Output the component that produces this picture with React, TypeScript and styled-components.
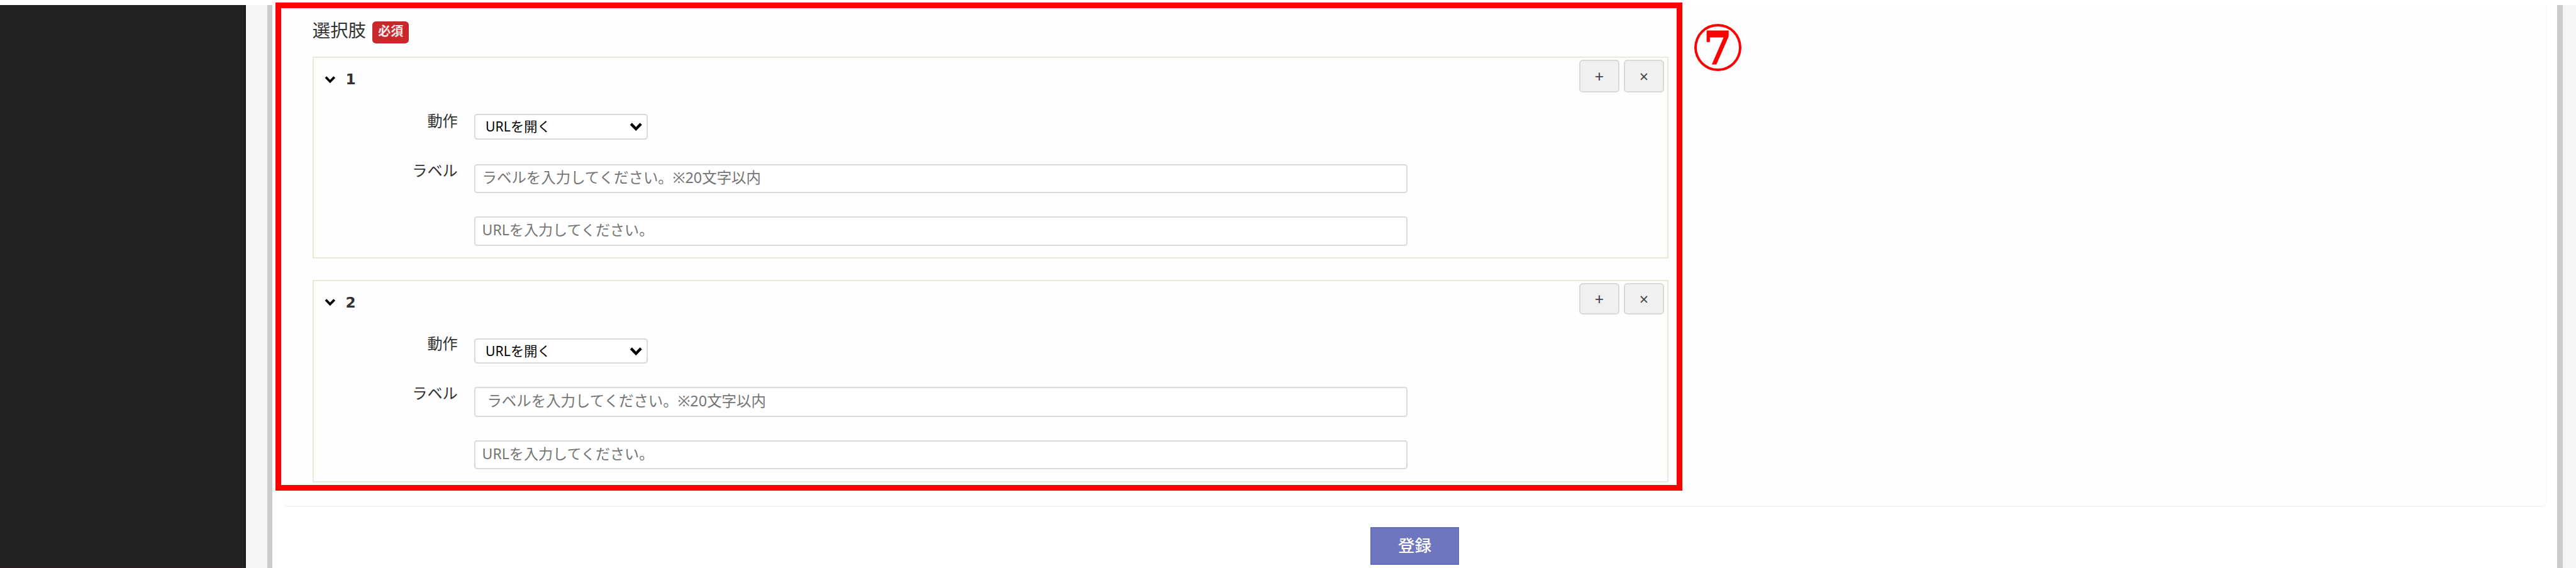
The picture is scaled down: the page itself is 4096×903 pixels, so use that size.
import React from 'react';
import styled, { createGlobalStyle } from 'styled-components';

// 1rem = 1/440 of the window width
const GlobalStyle = createGlobalStyle`
  html {
    font-size: 0.2272727vw;
  }

  body {
    background: #fff;
    color: #333;
    font-family: 'Noto Sans', 'Noto Sans CJK JP', sans-serif;
    margin: 0;
    overflow: hidden;
  }

  * {
    box-sizing: border-box;
  }
`;

const Page = styled.div`
  display: flex;
  height: 97rem;
  padding-top: 0.9rem;
  position: relative;
  width: 440rem;
`;

const Sidebar = styled.div`
  background: #222;
  border-bottom: 1px solid #2b2023;
  border-right: 2px solid #141414;
  width: 42.05rem;
`;

const Gutter = styled.div<{ $width: string }>`
  background: #f6f6f6;
  flex: none;
  width: ${({ $width }) => $width};
`;

const Main = styled.main`
  border-left: 8px solid #cbcbcb;
  border-right: 9px solid #cbcbcb;
  display: flex;
  flex: 1;
  flex-direction: column;
  padding: 0 1.8rem;
`;

const Panel = styled.section`
  background: #fefefe;
  border: 1px solid #fbfbfb;
  border-bottom: 2px solid #f4f4f4;
  border-radius: 0 0 0.8rem 0.8rem;
  border-top: 0;
  height: 85.7rem;
  padding: 2.5rem 0 0 4.9rem;
`;

const Heading = styled.div`
  align-items: flex-start;
  display: flex;
  gap: 1.1rem;
  height: 6.3rem;
`;

const Title = styled.span`
  font-size: 3.05rem;
  line-height: 3.6rem;
`;

const Badge = styled.span`
  background: #c9282a;
  border-radius: 0.6rem;
  color: #fbe9e9;
  font-size: 2.15rem;
  font-weight: bold;
  height: 3.7rem;
  line-height: 3.5rem;
  margin-top: 0.3rem;
  text-align: center;
  width: 6.25rem;
`;

const Card = styled.div<{ $height: number }>`
  border: 2px solid #eeeadb;
  display: flex;
  flex-direction: column;
  height: ${({ $height }) => $height}rem;
  margin-bottom: 3.7rem;
  width: 231.6rem;
`;

const CardHead = styled.div`
  display: flex;
  height: 7.5rem;
  justify-content: space-between;
  padding: 0.3rem 0.5rem 0 1.8rem;
`;

const CardTitle = styled.div`
  align-items: center;
  display: flex;
  font-family: 'DejaVu Sans', sans-serif;
  font-size: 2.5rem;
  font-weight: bold;
  gap: 1.75rem;
  height: 6.6rem;
`;

const Buttons = styled.div`
  display: flex;
  gap: 0.75rem;
`;

const SmallButton = styled.button<{ $height: number }>`
  background: #f0f0f0;
  border: 2px solid #d9d9d9;
  border-radius: 0.6rem;
  color: #444;
  font-family: 'Noto Sans', sans-serif;
  font-size: 2.7rem;
  height: ${({ $height }) => $height}rem;
  line-height: 1;
  padding: 0.2rem 0 0;
  width: 6.9rem;
`;

const Row = styled.div<{ $height: number }>`
  align-items: flex-start;
  display: flex;
  height: ${({ $height }) => $height}rem;
`;

const Label = styled.label<{ $top: number }>`
  font-size: 2.6rem;
  line-height: 3rem;
  margin-right: 2.85rem;
  margin-top: ${({ $top }) => $top}rem;
  text-align: right;
  width: 24.6rem;
`;

const SelectBox = styled.div`
  align-items: center;
  background: #fff;
  border: 2px solid #dadada;
  border-radius: 0.5rem;
  display: flex;
  height: 4.35rem;
  padding-right: 0.7rem;
  width: 29.6rem;
`;

const Select = styled.select`
  appearance: none;
  background: transparent;
  border: 0;
  color: #000;
  flex: 1;
  font-family: inherit;
  font-size: 2.28rem;
  height: 100%;
  padding: 0 0 0.2rem 1.7rem;
`;

const TextInput = styled.input<{ $height: number; $indent: number; $size: number }>`
  background: #fff;
  border: 2px solid #dadada;
  border-radius: 0.5rem;
  font-family: inherit;
  font-size: ${({ $size }) => $size}rem;
  height: ${({ $height }) => $height}rem;
  padding: 0 0 0.5rem ${({ $indent }) => $indent}rem;
  width: 159.4rem;

  &::placeholder {
    color: #757575;
    opacity: 1;
  }
`;

const Submit = styled.button`
  align-self: center;
  background: #6d76be;
  border: 2px solid #656db9;
  color: #fff;
  font-family: inherit;
  font-size: 2.85rem;
  font-weight: 500;
  height: 6.5rem;
  line-height: 1;
  margin-top: 3.4rem;
  padding: 0 0 0.2rem;
  width: 15.1rem;
`;

const Frame = styled.div`
  border: 9px solid #f00;
  height: 83.4rem;
  left: 47.1rem;
  position: absolute;
  top: 0.4rem;
  width: 240.3rem;
`;

const Marker = styled.div`
  align-items: center;
  border: 4px solid #f00;
  border-radius: 50%;
  color: #f00;
  display: flex;
  font-family: 'DejaVu Serif', serif;
  font-size: 7.8rem;
  font-weight: bold;
  height: 8.05rem;
  justify-content: center;
  left: 289.4rem;
  line-height: 1;
  position: absolute;
  top: 4.1rem;
  width: 8rem;

  span {
    transform: translateY(0.2rem) scaleX(0.88);
    -webkit-text-stroke: 1px #f00;
  }
`;

const Chevron = ({ width, height }: { width: string; height: string }) => (
  <svg viewBox="0 0 18 12" preserveAspectRatio="none" style={{ width, height }}>
    <path d="M2 2.5 L9 9.5 L16 2.5" fill="none" stroke="#000" strokeWidth="3.8" />
  </svg>
);

const choices = [
  {
    height: 34.4,
    button: 5.6,
    selectTop: 2.05,
    labelTop: 1.7,
    rows: [8.6, 8.85],
    inputs: [4.9, 5.1],
    indent: 1.1,
  },
  {
    height: 34.6,
    button: 5.4,
    selectTop: 2.25,
    labelTop: 1.65,
    rows: [8.35, 9.1],
    inputs: [5.15, 4.9],
    indent: 1.95,
  },
];

const App = () => {
  return (
    <>
      <GlobalStyle />
      <Page>
        <Sidebar />
        <Gutter $width="3.65rem" />
        <Main>
          <Panel>
            <Heading>
              <Title>選択肢</Title>
              <Badge>必須</Badge>
            </Heading>
            {choices.map((choice, i) => {
              return (
                <Card key={i} $height={choice.height}>
                  <CardHead>
                    <CardTitle>
                      <Chevron width="1.9rem" height="1.3rem" />
                      {i + 1}
                    </CardTitle>
                    <Buttons>
                      <SmallButton $height={choice.button}>+</SmallButton>
                      <SmallButton $height={choice.button}>×</SmallButton>
                    </Buttons>
                  </CardHead>
                  <Row $height={choice.rows[0] + choice.selectTop}>
                    <Label $top={choice.labelTop}>動作</Label>
                    <SelectBox style={{ marginTop: `${choice.selectTop}rem` }}>
                      <Select>
                        <option>URLを開く</option>
                      </Select>
                      <Chevron width="2.2rem" height="1.5rem" />
                    </SelectBox>
                  </Row>
                  <Row $height={choice.rows[1]}>
                    <Label $top={-0.45}>ラベル</Label>
                    <TextInput
                      $height={choice.inputs[0]}
                      $indent={choice.indent}
                      $size={2.52}
                      placeholder="ラベルを入力してください。※20文字以内"
                    />
                  </Row>
                  <Row $height={choice.inputs[1]}>
                    <Label $top={0} />
                    <TextInput
                      $height={choice.inputs[1]}
                      $indent={1.1}
                      $size={2.48}
                      placeholder="URLを入力してください。"
                    />
                  </Row>
                </Card>
              );
            })}
          </Panel>
          <Submit>登録</Submit>
        </Main>
        <Gutter $width="2.3rem" />
        <Frame />
        <Marker>
          <span>7</span>
        </Marker>
      </Page>
    </>
  );
};

export default App;
